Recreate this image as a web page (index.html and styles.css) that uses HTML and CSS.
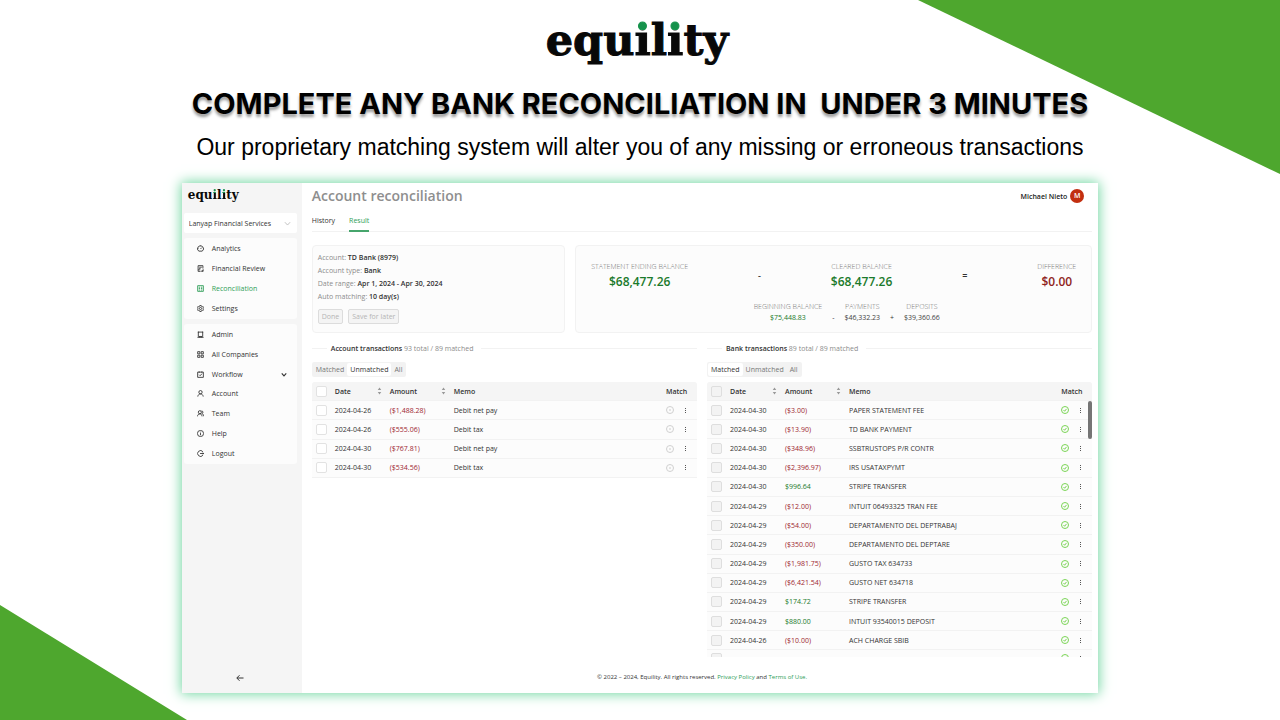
FILE: index.html
```html
<!DOCTYPE html>
<html lang="en">

<head>
    <meta charset="UTF-8">
    <meta name="viewport" content="width=device-width, initial-scale=1.0">
    <title>Equility</title>
    <link rel="stylesheet" href="styles.css">
</head>

<body>
    <svg class="sprite" aria-hidden="true">
        <symbol id="gauge" viewBox="0 0 16 16"><path d="M4 14a6.800 6.800 0 1 1 8 0zM8 9l3-3M8 3v1M3.500 8h1" /></symbol>
        <symbol id="review" viewBox="0 0 16 16"><path d="M13.500 8V1.500h-11v13H8M5 5h6M5 8h3M2.500 11h5M10 14.500l4-4v4z" /></symbol>
        <symbol id="recon" viewBox="0 0 16 16"><path d="M1.500 1.500h13v13h-13zM4 5h3M9 5h3M4 8h3M9 8h3M4 11.500h3M9 11.500h3" /></symbol>
        <symbol id="gear" viewBox="0 0 16 16"><path d="M6.500 1h3l.6 2 2 1 2-.4 1.400 2.600L14 8l1.500 1.800-1.400 2.600-2-.4-2 1-.6 2h-3l-.6-2-2-1-2 .4L.5 9.800 2 8 .5 6.200l1.400-2.600 2 .4 2-1z" /><circle cx="8" cy="8" r="2.500" /></symbol>
        <symbol id="admin" viewBox="0 0 16 16"><path d="M3 2.500h10v10H3zM1 14.500h14M3 1v3M13 1v3M6 12.500v2M10 12.500v2" /></symbol>
        <symbol id="apps" viewBox="0 0 16 16"><path d="M1.500 1.500h5v5h-5zM9.500 1.500h5v5h-5zM1.500 9.500h5v5h-5zM9.500 9.500h5v5h-5z" /></symbol>
        <symbol id="flow" viewBox="0 0 16 16"><path d="M1.500 2.500h13v12h-13zM5 1v3M11 1v3M5 8.500l2.200 2.200L11.500 6" /></symbol>
        <symbol id="user" viewBox="0 0 16 16"><circle cx="8" cy="5" r="3.800" /><path d="M1.800 15c.5-3.800 3-6 6.200-6s5.700 2.200 6.200 6" /></symbol>
        <symbol id="team" viewBox="0 0 16 16"><circle cx="6.500" cy="5" r="3.500" /><path d="M1 14.500c.4-3.400 2.500-5.500 5.500-5.500s4.500 2 5 5.500M10.500 1.800c4 .4 4 6 .5 6.400 2.500.6 4 2.800 4 6" /></symbol>
        <symbol id="help" viewBox="0 0 16 16"><circle cx="8" cy="8" r="7" /><path d="M8 4v1.500M8 7v5" /></symbol>
        <symbol id="logout" viewBox="0 0 16 16"><path d="M13.500 4a6.700 6.700 0 1 0 0 8M7 8h8.500M13 5.800L15.300 8 13 10.200" /></symbol>
        <symbol id="chevron" viewBox="0 0 16 16"><path d="M2 5l6 6.500L14 5" /></symbol>
        <symbol id="back" viewBox="0 0 16 16"><path d="M15 8H2M7 2.500L1.500 8 7 13.500" /></symbol>
        <symbol id="check" viewBox="0 0 16 16"><circle cx="8" cy="8" r="7" /><path d="M5 8l2.300 2.500L11 5.800" /></symbol>
        <symbol id="pending" viewBox="0 0 16 16"><circle cx="8" cy="8" r="7" /><path d="M8 7v2M6.500 8h3" /></symbol>
        <symbol id="sort" viewBox="0 0 8 16"><path d="M4 1l3.500 5h-7zM4 15l3.500-5h-7z" /></symbol>
    </svg>

    <div class="corner corner-top"></div>
    <div class="corner corner-bottom"></div>

    <header class="hero">
        <div class="logo logo-large">equ<span>i</span>l<span>i</span>ty</div>
        <h1>COMPLETE ANY BANK RECONCILIATION IN  UNDER 3 MINUTES</h1>
        <p>Our proprietary matching system will alter you of any missing or erroneous transactions</p>
    </header>

    <div class="app">
        <aside class="sidebar">
            <div class="logo logo-small">equ<span>i</span>l<span>i</span>ty</div>
            <div class="company">
                <select aria-label="Company">
                    <option>Lanyap Financial Services</option>
                </select>
                <svg class="icon"><use href="#chevron" /></svg>
            </div>
            <nav class="menu menu-main">
                <a href="#"><svg class="icon"><use href="#gauge" /></svg>Analytics</a>
                <a href="#"><svg class="icon"><use href="#review" /></svg>Financial Review</a>
                <a href="#" class="active"><svg class="icon"><use href="#recon" /></svg>Reconciliation</a>
                <a href="#"><svg class="icon"><use href="#gear" /></svg>Settings</a>
            </nav>
            <nav class="menu menu-more">
                <a href="#"><svg class="icon"><use href="#admin" /></svg>Admin</a>
                <a href="#"><svg class="icon"><use href="#apps" /></svg>All Companies</a>
                <a href="#"><svg class="icon"><use href="#flow" /></svg>Workflow<svg class="icon expand"><use href="#chevron" /></svg></a>
                <a href="#"><svg class="icon"><use href="#user" /></svg>Account</a>
                <a href="#"><svg class="icon"><use href="#team" /></svg>Team</a>
                <a href="#"><svg class="icon"><use href="#help" /></svg>Help</a>
                <a href="#"><svg class="icon"><use href="#logout" /></svg>Logout</a>
            </nav>
            <button class="collapse" aria-label="Collapse"><svg class="icon"><use href="#back" /></svg></button>
        </aside>

        <main>
            <div class="topbar">
                <h2>Account reconciliation</h2>
                <div class="profile">Michael Nieto <span class="avatar">M</span></div>
            </div>
            <nav class="tabs">
                <a href="#">History</a>
                <a href="#" class="active">Result</a>
            </nav>

            <div class="cards">
                <section class="card details">
                    <div>Account: <b>TD Bank (8979)</b></div>
                    <div>Account type: <b>Bank</b></div>
                    <div>Date range: <b>Apr 1, 2024 - Apr 30, 2024</b></div>
                    <div>Auto matching: <b>10 day(s)</b></div>
                    <div class="actions">
                        <button disabled>Done</button>
                        <button disabled>Save for later</button>
                    </div>
                </section>
                <section class="card summary">
                    <div class="totals">
                        <div class="figure">STATEMENT ENDING BALANCE<strong class="pos">$68,477.26</strong></div>
                        <span class="sign">-</span>
                        <div class="figure">CLEARED BALANCE<strong class="pos">$68,477.26</strong></div>
                        <span class="sign">=</span>
                        <div class="figure">DIFFERENCE<strong class="neg">$0.00</strong></div>
                    </div>
                    <div class="parts">
                        <div class="part">BEGINNING BALANCE<span class="pos">$75,448.83</span></div>
                        <span>-</span>
                        <div class="part">PAYMENTS<span>$46,332.23</span></div>
                        <span>+</span>
                        <div class="part">DEPOSITS<span>$39,360.66</span></div>
                    </div>
                </section>
            </div>

            <div class="lists">
                <section>
                    <h3><b>Account transactions</b>&nbsp;93 total / 89 matched</h3>
                    <div class="segmented">
                        <button>Matched</button><button class="selected">Unmatched</button><button>All</button>
                    </div>
                    <div class="scroll">
                        <table class="short" id="account"></table>
                    </div>
                </section>
                <section>
                    <h3><b>Bank transactions</b>&nbsp;89 total / 89 matched</h3>
                    <div class="segmented">
                        <button class="selected">Matched</button><button>Unmatched</button><button>All</button>
                    </div>
                    <div class="scroll">
                        <table class="long" id="bank"></table>
                        <div class="thumb"></div>
                    </div>
                </section>
            </div>

            <footer>© 2022 – 2024, Equility. All rights reserved. <a href="#">Privacy Policy</a> and <a href="#">Terms of Use.</a></footer>
        </main>
    </div>

    <script>
        const account = [
            ['2024-04-26', '($1,488.28)', 'Debit net pay'],
            ['2024-04-26', '($555.06)', 'Debit tax'],
            ['2024-04-30', '($767.81)', 'Debit net pay'],
            ['2024-04-30', '($534.56)', 'Debit tax']
        ];
        const bank = [
            ['2024-04-30', '($3.00)', 'PAPER STATEMENT FEE'],
            ['2024-04-30', '($13.90)', 'TD BANK PAYMENT'],
            ['2024-04-30', '($348.96)', 'SSBTRUSTOPS P/R CONTR'],
            ['2024-04-30', '($2,396.97)', 'IRS USATAXPYMT'],
            ['2024-04-30', '$996.64', 'STRIPE TRANSFER'],
            ['2024-04-29', '($12.00)', 'INTUIT 06493325 TRAN FEE'],
            ['2024-04-29', '($54.00)', 'DEPARTAMENTO DEL DEPTRABAJ'],
            ['2024-04-29', '($350.00)', 'DEPARTAMENTO DEL DEPTARE'],
            ['2024-04-29', '($1,981.75)', 'GUSTO TAX 634733'],
            ['2024-04-29', '($6,421.54)', 'GUSTO NET 634718'],
            ['2024-04-29', '$174.72', 'STRIPE TRANSFER'],
            ['2024-04-29', '$880.00', 'INTUIT 93540015 DEPOSIT'],
            ['2024-04-26', '($10.00)', 'ACH CHARGE SBIB'],
            ['', '', '']
        ];
        const sort = '<svg class="sort"><use href="#sort" /></svg>';

        const fill = (id, rows, matched) => {
            const box = label => `<input type="checkbox" aria-label="${label}"${matched ? ' disabled' : ''}>`;
            const body = rows.map(([date, amount, memo]) => `<tr>
                <td>${box('Select row')}</td>
                <td>${date}</td>
                <td class="${amount.startsWith('(') ? 'neg' : 'pos'}">${amount}</td>
                <td>${memo}</td>
                <td><div class="match"><svg class="icon ${matched ? 'ok' : 'wait'}"><use href="#${matched ? 'check' : 'pending'}" /></svg>
                    <button class="more" aria-label="More"><i></i><i></i><i></i></button></div></td>
            </tr>`).join('');
            document.getElementById(id).innerHTML = `<thead><tr>
                <th class="col-box">${box('Select all')}</th>
                <th class="col-date">Date${sort}</th>
                <th class="col-amount">Amount${sort}</th>
                <th>Memo</th>
                <th class="col-match">Match</th>
            </tr></thead><tbody>${body}</tbody>`;
        };

        fill('account', account, false);
        fill('bank', bank, true);
    </script>
</body>

</html>
```
FILE: styles.css
```css
* {
    box-sizing: border-box;
    margin: 0;
    padding: 0;
}

body {
    position: relative;
    min-height: 100vh;
    padding-bottom: 27px;
    background: white;
    color: #333;
    font-family: "Open Sans", "Noto Sans", sans-serif;
    font-size: 7px;
    line-height: 13px;
    overflow-x: hidden;
}

a {
    color: inherit;
    text-decoration: none;
}

button,
select,
input {
    font: inherit;
    color: inherit;
    border: none;
    background: none;
}

.sprite {
    display: none;
}

.icon {
    width: 7px;
    height: 7px;
    flex: none;
    fill: none;
    stroke: currentColor;
    stroke-width: 2;
}

.pos {
    color: #1b7a2b;
}

.neg {
    color: #9c2630;
}

/* green corners behind the page */
.corner {
    position: absolute;
    background: #4ea72e;
}

.corner-top {
    top: 0;
    right: 0;
    width: 362px;
    height: 174px;
    clip-path: polygon(0 0, 100% 0, 100% 100%);
}

.corner-bottom {
    bottom: 0;
    left: 0;
    width: 187px;
    height: 115px;
    clip-path: polygon(0 0, 100% 100%, 0 100%);
}

.hero {
    position: relative;
    height: 183px;
    padding-top: 12px;
    text-align: center;
    color: black;
}

.logo {
    color: #080808;
    font-family: "DejaVu Serif", serif;
    font-weight: bold;
}

/* the dot of the i is green, the stem stays black */
.logo span {
    background: linear-gradient(#15924b 31%, #080808 31%);
    background-clip: text;
    -webkit-background-clip: text;
    color: transparent;
}

.logo-large {
    padding-right: 6px;
    font-size: 43px;
    line-height: 56px;
    -webkit-text-stroke: 1px;
}

.logo-small {
    margin-left: 4px;
    font-size: 12px;
    line-height: 16px;
}

.logo-small span {
    background-image: linear-gradient(#15924b 38%, #080808 38%);
}

.hero h1 {
    margin-top: 16px;
    font-family: Inter, sans-serif;
    font-size: 29px;
    line-height: 40px;
    white-space: pre;
    text-shadow: 0 3px 3px rgba(0, 0, 0, 0.4);
}

.hero p {
    margin-top: 7px;
    font-family: "Liberation Sans", sans-serif;
    font-size: 23px;
    line-height: 32px;
}

.app {
    position: relative;
    display: flex;
    width: 71.6%;
    margin: 0 auto;
    background: white;
    box-shadow: 0 0 12px 1px #6fd6a0;
}

.sidebar {
    display: flex;
    flex-direction: column;
    width: 120px;
    padding: 4px 5px 9px 2px;
    background: #f5f5f5;
}

.company {
    position: relative;
    margin-top: 10px;
}

.company select {
    display: block;
    width: 100%;
    height: 20px;
    padding: 0 5px;
    border-radius: 2px;
    background: white;
    appearance: none;
}

.company .icon {
    position: absolute;
    right: 6px;
    top: 7px;
    color: #bbb;
}

.menu {
    display: grid;
    grid-auto-rows: 1fr;
    margin-top: 5px;
    padding: 1px 0;
    border-radius: 3px;
    background: #fcfcfc;
}

.menu-main {
    height: 81px;
}

.menu-more {
    height: 140px;
}

.menu a {
    display: flex;
    align-items: center;
    gap: 8px;
    padding: 0 10px 0 13px;
}

.menu .active {
    color: #2e9e57;
}

.menu .expand {
    width: 6px;
    margin-left: auto;
    stroke-width: 3;
}

.collapse {
    display: flex;
    justify-content: center;
    margin-top: auto;
    padding: 2px;
}

.collapse .icon {
    width: 8px;
    height: 8px;
}

main {
    flex: 1;
    min-width: 0;
    padding: 3px 6px 9px 10px;
}

.topbar {
    display: flex;
    justify-content: space-between;
    align-items: center;
}

.topbar h2 {
    color: #8e8e8e;
    font-size: 14px;
    font-weight: 600;
    line-height: 20px;
}

.profile {
    display: flex;
    align-items: center;
    gap: 3px;
    margin-right: 8px;
    color: #222;
    font-weight: 600;
}

.avatar {
    width: 14px;
    height: 14px;
    border-radius: 50%;
    background: #c22f10;
    color: white;
    line-height: 14px;
    text-align: center;
}

.tabs {
    display: flex;
    gap: 14px;
    margin-top: 8px;
    border-bottom: 1px solid #f2f2f2;
}

.tabs a {
    padding-bottom: 2px;
    line-height: 14px;
}

.tabs .active {
    margin-bottom: -1px;
    border-bottom: 2px solid #46a56c;
    color: #2e9e57;
    font-weight: 500;
}

.cards {
    display: grid;
    grid-template-columns: 25fr 51fr;
    gap: 10px;
    margin-top: 13px;
}

.card {
    border: 1px solid #f2f2f2;
    border-radius: 4px;
    background: #fcfcfc;
}

.details {
    padding: 5px 5px 8px;
    color: #8c8c8c;
}

.details b {
    color: #333;
    font-weight: 600;
}

.actions {
    display: flex;
    gap: 5px;
    margin-top: 6px;
}

.actions button {
    height: 15px;
    padding: 0 3px;
    border: 1px solid #dcdcdc;
    border-radius: 2px;
    background: #f4f4f4;
    color: #b5b5b5;
    line-height: 13px;
}

.summary {
    padding: 14px 15px 9px;
}

.totals {
    display: flex;
    justify-content: space-between;
    align-items: center;
}

.figure,
.part {
    display: flex;
    flex-direction: column;
    align-items: center;
    color: #777;
    font-weight: 300;
}

.figure strong {
    font-size: 12px;
    font-weight: 600;
    line-height: 17px;
}

.figure .neg {
    color: #8f1f22;
}

.sign {
    font-size: 9px;
    font-weight: 600;
}

.parts {
    display: flex;
    justify-content: center;
    align-items: flex-end;
    gap: 10px;
    margin: 11px 0 0 26px;
    line-height: 11px;
}

.part span {
    color: #444;
    font-weight: 400;
}

.part .pos {
    color: #1b7a2b;
}

.lists {
    display: grid;
    grid-template-columns: 1fr 1fr;
    gap: 10px;
    margin-top: 9px;
}

h3 {
    display: flex;
    align-items: center;
    color: #8c8c8c;
    font-size: 7px;
    font-weight: 400;
}

h3 b {
    color: #333;
    font-weight: 600;
}

h3::before,
h3::after {
    content: "";
    width: 15px;
    margin-right: 4px;
    border-top: 1px solid #f2f2f2;
}

h3::after {
    flex: 1;
    margin: 0 0 0 8px;
}

.segmented {
    display: flex;
    width: fit-content;
    margin-top: 7px;
    padding: 1px;
    border-radius: 2px;
    background: #f2f2f2;
    color: #777;
}

.segmented button {
    padding: 0 3px;
    border-radius: 2px;
}

.segmented .selected {
    background: white;
    color: #333;
}

.scroll {
    position: relative;
    height: 275px;
    margin-top: 5px;
    overflow: hidden;
}

.thumb {
    position: absolute;
    top: 19px;
    right: 0;
    width: 4px;
    height: 38px;
    border-radius: 2px;
    background: #757575;
}

table {
    width: 100%;
    table-layout: fixed;
    border-spacing: 0;
    border-radius: 3px 3px 0 0;
    background: #fcfcfc;
    overflow: hidden;
}

.short {
    height: 96px;
}

.long {
    height: 285px;
}

th,
td {
    padding: 0 4px;
    border-bottom: 1px solid #f2f2f2;
    text-align: left;
    white-space: nowrap;
}

th {
    height: 19px;
    background: #f5f5f5;
    font-weight: 600;
}

.col-box {
    width: 19px;
}

.col-date {
    width: 55px;
}

.col-amount {
    width: 64px;
}

.col-match {
    width: 35px;
}

.sort {
    float: right;
    width: 5px;
    height: 8px;
    margin-top: 2px;
    fill: #999;
}

input[type="checkbox"] {
    display: block;
    width: 11px;
    height: 11px;
    border: 1px solid #e2e2e2;
    border-radius: 2px;
    background: white;
    appearance: none;
}

input[type="checkbox"]:disabled {
    background: #f3f3f3;
    border-color: #dedede;
}

.match {
    display: flex;
    align-items: center;
    gap: 11px;
}

.match .icon {
    width: 8px;
    height: 8px;
}

.match .wait {
    color: #d0d0d0;
}

.match .ok {
    color: #7bd455;
}

.more {
    display: grid;
    gap: 1px;
}

.more i {
    width: 1px;
    height: 1px;
    background: #555;
}

footer {
    margin-top: 14px;
    font-size: 6px;
    text-align: center;
}

footer a {
    color: #2e9e57;
}
```
